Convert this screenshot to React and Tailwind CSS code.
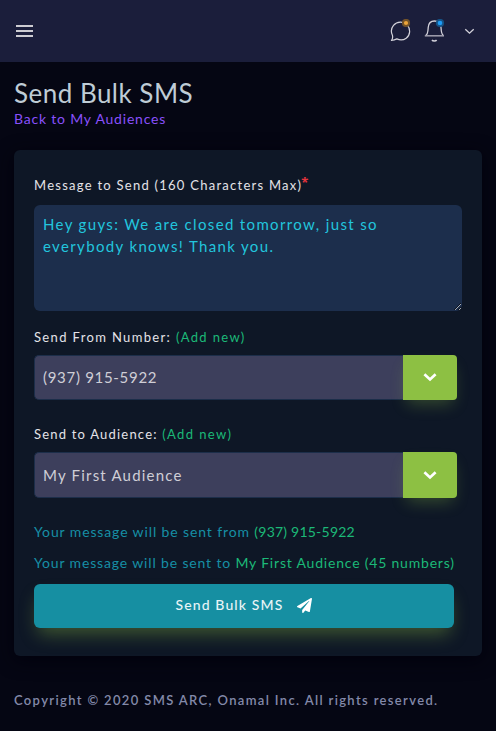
import React from "react";

function Header() {
  return (
    <header className="flex h-[62px] items-center bg-[#1b1e3b] pl-4 pr-[21px]">
      <button className="flex w-[17px] flex-col gap-[3px]" aria-label="Menu">
        <span className="h-[2px] w-full bg-[#cdccd2]" />
        <span className="h-[2px] w-full bg-[#cdccd2]" />
        <span className="h-[2px] w-full bg-[#cdccd2]" />
      </button>
      <div className="ml-auto flex items-center">
        <svg className="mr-[12px]" width="22" height="24" viewBox="0 0 22 24" fill="none">
          <path d="M1.4 21.5C2.6 20 2.9 18.4 2.5 16.6C1 13.5 1.2 9.2 3.5 6.4C7 2.2 13.5 2 17.2 5.8C20.9 10.2 20.2 16.5 16.2 19.2C13.4 21.2 9.8 21.3 6.9 19.9C5.4 20.7 3.4 21.3 1.4 21.5Z" stroke="#d3d2da" strokeWidth="1.2" strokeLinejoin="round" />
          <circle cx="16" cy="4" r="4.1" fill="#735329" />
          <circle cx="16" cy="4" r="2.1" fill="#eda63a" />
        </svg>
        <svg className="mr-[18px]" width="22" height="24" viewBox="0 0 22 24" fill="none">
          <path d="M1.5 16.5C4 15.5 4 12 4.2 8.5C4.5 4.5 7 2 10.5 2C14.4 2 16.8 4.5 17 8.5C17.2 12 17.3 15.4 19.5 16.5" stroke="#d3d2da" strokeWidth="1.3" />
          <path d="M0.8 16.8H20" stroke="#a2a1af" strokeWidth="1.5" />
          <path d="M8 21C8.8 22.3 11.8 22.3 12.6 21" stroke="#d3d2da" strokeWidth="1.5" />
          <circle cx="16" cy="4" r="4.1" fill="#155285" />
          <circle cx="16" cy="4" r="2.3" fill="#1e9bf5" />
        </svg>
        <svg width="11" height="7" viewBox="0 0 11 7" fill="none">
          <path d="M1.3 1.2L5.5 5.2L9.7 1.2" stroke="#d3d2da" strokeWidth="1.3" />
        </svg>
      </div>
    </header>
  );
}

function Select({ children, height }) {
  return (
    <div className={`flex w-[423px] ${height}`}>
      <div className="flex flex-1 items-center rounded-l-[5px] border border-r-0 border-[#1c2e4a] bg-[#3d3f5c] pl-2 text-[15px] text-[#cfced6]">
        {children}
      </div>
      <button className="flex w-[54px] items-center justify-center rounded-r-[4px] bg-[#8dc043] shadow-[0_8px_16px_-4px_rgba(141,192,67,0.3)]" aria-label="Open">
        <svg width="14" height="9" viewBox="0 0 14 9" fill="none">
          <path d="M1.4 1.2L7 6.4L12.6 1.2" stroke="#fff" strokeWidth="2.7" />
        </svg>
      </button>
    </div>
  );
}

export default function App() {
  return (
    <div className="h-[731px] w-[496px] overflow-hidden bg-[#050613] font-[Lato,'Open_Sans',sans-serif]">
      <Header />
      <main className="px-[14px] pt-[15px]">
        <h1 className="h-8 whitespace-nowrap text-[26px] leading-[33px] tracking-[0.48px] text-[#bfccd6]">Send Bulk SMS</h1>
        <a className="block h-5 whitespace-nowrap text-[14px] leading-5 tracking-[0.8px] text-[#8950fc]">Back to My Audiences</a>
        <section className="mt-[21px] h-[506px] rounded-[6px] bg-[#0e1726] px-5 pt-[25px] shadow-[0_4px_18px_rgba(0,0,12,0.9)]">
          <label className="flex h-5 whitespace-nowrap text-[13px] leading-5 text-[#e4e3e8]">
            <span className="tracking-[1.26px]">Message to Send (160 Characters Max)</span>
            <span className="-ml-px -mt-[3px] font-['Open_Sans',sans-serif] text-[13px] font-bold leading-5 text-[#e5343d]">*</span>
          </label>
          <textarea
            className="mt-[10px] block h-[106px] w-[428px] rounded-[6px] bg-[#1c2e4c] px-[9px] py-2 text-[15px] leading-[22px] tracking-[1.35px] text-[#22c5dd] outline-none"
            defaultValue={"Hey guys: We are closed tomorrow, just so\neverybody knows! Thank you."}
          />
          <div className="mt-4 h-5 whitespace-nowrap text-[13px] leading-5 tracking-[1.35px] text-[#e4e3e8]">
            Send From Number: <span className="text-[#1cb978]">(Add new)</span>
          </div>
          <div className="mt-2">
            <Select height="h-[45px]"><span className="tracking-[0.7px]">(937) 915-5922</span></Select>
          </div>
          <div className="mt-6 h-5 whitespace-nowrap text-[13px] leading-5 text-[#e4e3e8]">
            <span className="tracking-[1.2px]">Send to Audience: </span>
            <span className="tracking-[1.4px] text-[#1cb978]">(Add new)</span>
          </div>
          <div className="mt-2">
            <Select height="h-[46px]"><span className="tracking-[1.2px]">My First Audience</span></Select>
          </div>
          <p className="mt-6 h-5 whitespace-nowrap text-[14px] leading-5 text-[#168fa5]">
            <span className="tracking-[0.88px]">Your message will be sent from </span>
            <span className="tracking-[0.22px] text-[#1cb978]">(937) 915-5922</span>
          </p>
          <p className="mt-[11px] h-5 whitespace-nowrap text-[14px] leading-5 text-[#168fa5]">
            <span className="tracking-[0.85px]">Your message will be sent to </span>
            <span className="tracking-[0.8px] text-[#1cb978]">My First Audience (45 numbers)</span>
          </p>
          <button className="mt-[11px] flex h-11 w-[420px] items-center justify-center rounded-[6px] bg-[#168fa2] pb-[2px] text-[14px] font-medium text-[#e8f4f6] shadow-[0_10px_18px_-4px_rgba(141,192,67,0.38)]">
            <span className="mb-[2px] tracking-[1.12px]">Send Bulk SMS</span>
            <svg className="ml-[14px]" width="15" height="15" viewBox="0 0 512 512" fill="#fff">
              <path d="M476 3.2L12.5 270.6c-18.1 10.4-15.8 35.6 2.2 43.2L121 358.4l287.3-253.2c5.5-4.9 13.3 2.6 8.6 8.3L176 407v80.5c0 23.6 28.5 32.9 42.5 15.8L282 426l124.6 52.2c14.2 6 30.4-2.9 33-18.2l72-432C515 7.8 493.3-6.8 476 3.2z" />
            </svg>
          </button>
        </section>
        <footer className="mt-[34px] h-5 whitespace-nowrap text-[13px] font-semibold leading-5 tracking-[1.35px] text-[#8389a9]">
          Copyright © 2020 SMS ARC, Onamal Inc. All rights reserved.
        </footer>
      </main>
    </div>
  );
}
